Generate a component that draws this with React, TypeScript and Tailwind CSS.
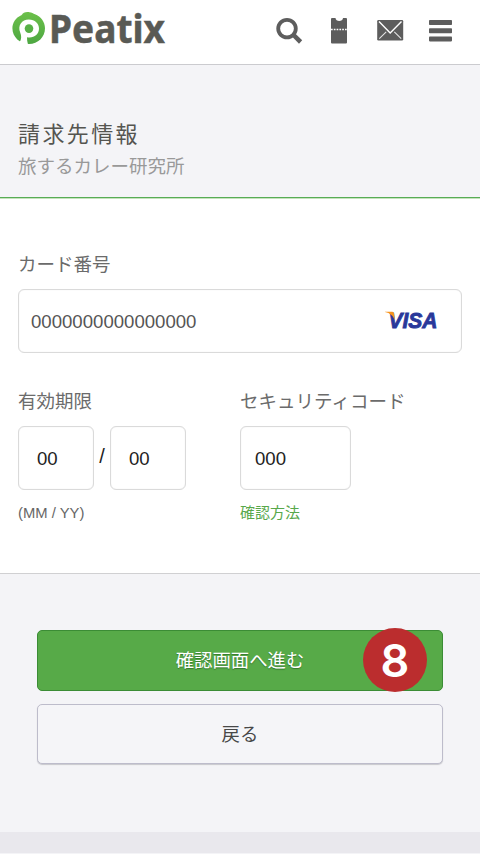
import type { ReactNode } from "react";

const Logo = () => (
  <svg width="160" height="52" viewBox="0 0 160 52" role="img" aria-label="Peatix">
    <defs>
      <linearGradient id="leaf" x1="0" y1="0" x2="0" y2="1">
        <stop offset="0" stopColor="#6cc04a" />
        <stop offset="1" stopColor="#4da742" />
      </linearGradient>
    </defs>
    <path
      d="M9.6 5.8C11 3.6 14 2.4 17.5 3.2C19.5 3.6 21.5 4.4 23 5.2C29 7.6 33 13 33 19.2C33 28 26 35 17 35C8 35 .4 28 .4 19.2C.4 13.4 4 8.6 8.8 6.4L10.8 5.6Z"
      fill="url(#leaf)"
    />
    <path
      d="M16.8 10.6C23 10.6 27 14.6 27 19.6C27 25 22.8 28.6 17.6 28.6C16.4 28.6 15.6 28.4 15 28.2C15 30.6 15.2 33 16 35.4H11.4C9.8 34.6 8.8 34 7.6 33C9.6 30.6 9.6 27 8.2 23.6C5.4 16.6 9.8 10.6 16.8 10.6Z"
      fill="#fff"
    />
    <circle cx="17" cy="19.6" r="4.3" fill="#57b046" />
    <text
      x="37"
      y="34.3"
      textLength="116"
      lengthAdjust="spacingAndGlyphs"
      className="fill-[#595a55] stroke-[#595a55] stroke-[0.5] font-['Noto_Sans',sans-serif] text-[40px] font-bold"
    >
      Peatix
    </text>
  </svg>
);

const Header = () => (
  <header className="flex h-[65px] items-start justify-between border-b border-[#cbcbcf] bg-white pl-3">
    <div className="pt-[9px]">
      <Logo />
    </div>
    <svg width="220" height="64" viewBox="0 0 220 64" fill="#5d5d5d">
      <circle cx="27" cy="28.6" r="8.8" fill="none" stroke="#5d5d5d" strokeWidth="3.8" />
      <path d="M32.2 36.7L35.2 33.6L42.2 40.3L39 43.7Z" />
      <path d="M72 18H75.5C75.5 22 83 22 83 18H86Q87 18 87 19V42.5Q87 43.5 86 43.5H72Q71 43.5 71 42.5V19Q71 18 72 18Z" />
      <path d="M71 29.5H87" stroke="#fff" strokeWidth="1.6" strokeDasharray="1.7 1.1" />
      <rect x="117.2" y="20" width="26" height="20.5" rx="1.2" />
      <path d="M119 21.5L130.2 33L141.5 21.5" fill="none" stroke="#fff" strokeWidth="1.4" />
      <path d="M119.3 38.7L126.2 31.8M134.3 31.8L141.2 38.7" stroke="#e4e4e4" strokeWidth="1.1" />
      <rect x="169" y="20" width="23" height="5" rx=".8" />
      <rect x="169" y="28.2" width="23" height="5" rx=".8" />
      <rect x="169" y="36.4" width="23" height="5" rx=".8" />
    </svg>
  </header>
);

const VisaMark = () => (
  <svg width="60" height="36" viewBox="0 0 60 36" role="img" aria-label="VISA">
    <text
      x="3.5"
      y="26"
      textLength="49"
      lengthAdjust="spacingAndGlyphs"
      className="fill-[#29389a] stroke-[#29389a] stroke-[0.9] font-['Liberation_Sans',sans-serif] text-[22.5px] font-bold italic"
    >
      VISA
    </text>
    <path d="M0 9.7H6.5C8 9.7 8.8 10.2 9 11.3L10 18.5C8.4 14 5 11 0 10Z" fill="#f7941d" />
  </svg>
);

type FieldProps = {
  className: string;
  children: ReactNode;
};

const Field = ({ className, children }: FieldProps) => (
  <div
    className={`flex h-16 items-center rounded-md border border-[#dadada] bg-white pt-0.5 font-['Liberation_Sans',sans-serif] text-[18.6px] shadow-[inset_0_0_1px_#dadada] ${className}`}
  >
    {children}
  </div>
);

const Label = ({ children }: { children: ReactNode }) => (
  <div className="h-[26px] text-[18.5px] leading-[26px] text-[#6b6b6b]">{children}</div>
);

const App = () => {
  return (
    <div className="flex h-[854px] w-[480px] flex-col overflow-hidden bg-[#f4f4f7] font-['Noto_Sans_CJK_JP',sans-serif]">
      <Header />

      {/* Page title */}
      <section className="h-[133px] border-b border-[#58ac55] px-[18px] pt-[51px]">
        <h1 className="h-[33px] text-[22px] leading-8 tracking-[2.4px] text-[#555550]">請求先情報</h1>
        <p className="h-8 text-[18.5px] leading-8 text-[#999]">旅するカレー研究所</p>
      </section>

      {/* Card details */}
      <main className="h-[376px] border-t border-b border-t-[#c4e3bd] border-b-[#d0d0d2] bg-white px-[18px] pt-[51px]">
        <Label>カード番号</Label>
        <Field className="mt-[13px] justify-between pr-4 pl-3 text-[#555]">
          <span>0000000000000000</span>
          <span className="-mt-1">
            <VisaMark />
          </span>
        </Field>

        <div className="mt-[34px] flex">
          <div className="w-[222px]">
            <Label>有効期限</Label>
            <div className="mt-[13px] flex">
              <Field className="w-[76px] pl-[18px] text-[#222]">00</Field>
              <span className="w-4 pt-[15px] text-center font-['Liberation_Sans',sans-serif] text-[20px] text-[#222]">
                /
              </span>
              <Field className="w-[76px] pl-[18px] text-[#222]">00</Field>
            </div>
            <p className="mt-3 font-['Liberation_Sans',sans-serif] text-[14.8px] leading-[22px] text-[#666]">
              (MM / YY)
            </p>
          </div>
          <div>
            <Label>セキュリティコード</Label>
            <Field className="mt-[13px] w-[111px] pl-[14px] text-[#222]">000</Field>
            <a className="mt-[11px] block text-[15px] leading-[22px] text-[#58a84b]">確認方法</a>
          </div>
        </div>
      </main>

      {/* Actions */}
      <section className="h-[258px] px-[37px] pt-[56px] text-[18.4px]">
        <div className="relative">
          <button className="block h-[61px] w-full rounded-[5px] border border-[#3b8c35] bg-[#57aa48] pb-0.5 text-white [text-shadow:0_1px_1px_#34752d]">
            確認画面へ進む
          </button>
          <span className="absolute -top-0.5 right-4 flex size-16 items-center justify-center rounded-full bg-[#bb2d2e] font-['Inter',sans-serif] text-[45px] leading-none font-semibold text-white">
            8
          </span>
        </div>
        <button className="mt-[13px] block h-[60px] w-full rounded-[5px] border border-[#bdbccb] bg-[#f5f5f8] text-[#484848] shadow-[0_1px_1px_#c8c8cd]">
          戻る
        </button>
      </section>

      <footer className="h-[21px] bg-[#e9e8ed]" />
    </div>
  );
};

export default App;
